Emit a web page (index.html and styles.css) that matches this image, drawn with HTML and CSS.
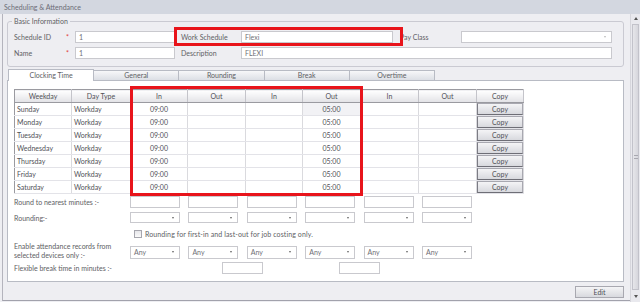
FILE: index.html
```html
<!DOCTYPE html>
<html lang="en">
<head>
    <meta charset="UTF-8">
    <meta name="viewport" content="width=device-width, initial-scale=1.0">
    <title>Scheduling &amp; Attendance</title>
    <link rel="stylesheet" href="styles.css">
</head>
<body>
    <div class="titlebar">Scheduling &amp; Attendance</div>
    <div class="frame">
        <div class="main">
            <fieldset class="basic">
                <legend>Basic Information</legend>
                <div class="basic-grid">
                    <span>Schedule ID</span><span class="req">*</span><div class="field">1</div>
                    <span class="lbl-mid">Work Schedule</span><div class="field">Flexi</div>
                    <span class="lbl-right">Pay Class</span><div class="field select"><span></span><i class="arrow light"></i></div>
                    <span>Name</span><span class="req">*</span><div class="field">1</div>
                    <span class="lbl-mid">Description</span><div class="field wide">FLEXI</div>
                </div>
            </fieldset>

            <div class="tabs">
                <div class="tab active">Clocking Time</div>
                <div class="tab">General</div>
                <div class="tab">Rounding</div>
                <div class="tab">Break</div>
                <div class="tab">Overtime</div>
            </div>

            <div class="panel">
                <table class="times">
                    <colgroup>
                        <col style="width:57px"><col style="width:59px"><col style="width:57px">
                        <col style="width:58px"><col style="width:57px"><col style="width:58px">
                        <col style="width:58px"><col style="width:58px"><col style="width:47px">
                    </colgroup>
                    <thead>
                        <tr><th>Weekday</th><th>Day Type</th><th>In</th><th>Out</th><th>In</th><th>Out</th><th>In</th><th>Out</th><th>Copy</th></tr>
                    </thead>
                    <tbody>
                        <tr><td>Sunday</td><td>Workday</td><td class="t">09:00</td><td></td><td></td><td class="t cur">05:00</td><td></td><td></td><td class="copy"><button>Copy</button></td></tr>
                        <tr><td>Monday</td><td>Workday</td><td class="t">09:00</td><td></td><td></td><td class="t">05:00</td><td></td><td></td><td class="copy"><button>Copy</button></td></tr>
                        <tr><td>Tuesday</td><td>Workday</td><td class="t">09:00</td><td></td><td></td><td class="t">05:00</td><td></td><td></td><td class="copy"><button>Copy</button></td></tr>
                        <tr><td>Wednesday</td><td>Workday</td><td class="t">09:00</td><td></td><td></td><td class="t">05:00</td><td></td><td></td><td class="copy"><button>Copy</button></td></tr>
                        <tr><td>Thursday</td><td>Workday</td><td class="t">09:00</td><td></td><td></td><td class="t">05:00</td><td></td><td></td><td class="copy"><button>Copy</button></td></tr>
                        <tr><td>Friday</td><td>Workday</td><td class="t">09:00</td><td></td><td></td><td class="t">05:00</td><td></td><td></td><td class="copy"><button>Copy</button></td></tr>
                        <tr><td>Saturday</td><td>Workday</td><td class="t">09:00</td><td></td><td></td><td class="t">05:00</td><td></td><td></td><td class="copy"><button>Copy</button></td></tr>
                    </tbody>
                </table>

                <div class="opt-row row-round">
                    <span>Round to nearest minutes :-</span>
                    <div class="field"></div><div class="field"></div><div class="field"></div>
                    <div class="field"></div><div class="field"></div><div class="field"></div>
                </div>
                <div class="opt-row row-rounding">
                    <span>Rounding:-</span>
                    <div class="field select"><span></span><i class="arrow"></i></div>
                    <div class="field select"><span></span><i class="arrow"></i></div>
                    <div class="field select"><span></span><i class="arrow"></i></div>
                    <div class="field select"><span></span><i class="arrow"></i></div>
                    <div class="field select"><span></span><i class="arrow"></i></div>
                    <div class="field select"><span></span><i class="arrow"></i></div>
                </div>
                <div class="opt-row row-check">
                    <label class="checkline"><span class="checkbox"></span>Rounding for first-in and last-out for job costing only.</label>
                </div>
                <div class="opt-row row-enable">
                    <span class="two-line">Enable attendance records from<br>selected devices only :-</span>
                    <div class="field select">Any<i class="arrow"></i></div>
                    <div class="field select">Any<i class="arrow"></i></div>
                    <div class="field select">Any<i class="arrow"></i></div>
                    <div class="field select">Any<i class="arrow"></i></div>
                    <div class="field select">Any<i class="arrow"></i></div>
                    <div class="field select">Any<i class="arrow"></i></div>
                </div>
                <div class="opt-row row-flex">
                    <span>Flexible break time in minutes :-</span>
                    <div class="field small span-a"></div>
                    <div class="field small span-b"></div>
                </div>
            </div>

            <div class="footer">
                <button class="btn-edit">Edit</button>
            </div>
        </div>

        <div class="scrollbar">
            <i class="sb-up"></i>
            <div class="sb-thumb"><span class="grip"></span></div>
            <i class="sb-down"></i>
        </div>
    </div>

    <div class="mark mark-work"></div>
    <div class="mark mark-times"></div>
</body>
</html>
```

FILE: styles.css
```css
*{
    margin: 0;
    padding: 0;
    box-sizing: border-box;
}
body{
    width: 640px;
    height: 302px;
    overflow: hidden;
    background-color: #eeeef2;
    font-family: Lato, "Open Sans", sans-serif;
    font-size: 7px;
    color: #5e5e64;
}
.titlebar{
    height: 14px;
    line-height: 14px;
    padding-left: 4px;
    background-color: #d3d7e0;
    color: #6c6c76;
}
.frame{
    display: flex;
    height: 288px;
}
.main{
    flex: 1;
    height: 287px;
    margin-left: 2px;
    border-left: 1px solid #b4b4bd;
    border-bottom: 1px solid #a2a2ac;
}

/* basic information */
.basic{
    margin: 3px 6px 0 4px;
    border: 1px solid #cacad2;
    border-radius: 3px;
    padding: 5px 11px 7px 6px;
}
.basic legend{
    margin-left: -2px;
    padding: 0 2px;
    line-height: 9px;
}
.basic-grid{
    display: grid;
    grid-template-columns: 52px 9px 100px 66px 152px 68px 151px;
    grid-template-rows: 12px 12px;
    row-gap: 4px;
    align-items: center;
}
.req{
    color: #e23b3b;
}
.lbl-mid{
    padding-left: 6px;
}
.lbl-right{
    padding-left: 7px;
}
.field{
    height: 12px;
    line-height: 10px;
    padding-left: 3px;
    background-color: #fff;
    border: 1px solid #c9c9ce;
    color: #707076;
}
.field.wide{
    grid-column: 5 / 8;
}
.field.select{
    display: flex;
    align-items: center;
    justify-content: space-between;
    padding-right: 5px;
}
.arrow{
    width: 0;
    height: 0;
    border-left: 1.5px solid transparent;
    border-right: 1.5px solid transparent;
    border-top: 2px solid #666;
}
.arrow.light{
    border-top-color: #bbb;
}

/* tabs */
.tabs{
    display: flex;
    align-items: flex-end;
    height: 11px;
    margin: 2px 0 0 5px;
}
.tab{
    width: 86.2px;
    height: 10px;
    line-height: 9px;
    text-align: center;
    border: 1px solid #b8bbc4;
    border-bottom: none;
    margin-right: -1px;
    background: linear-gradient(#f7f7f9, #dcdfe5);
}
.tab.active{
    height: 12px;
    margin-bottom: -1px;
    line-height: 11px;
    background: #fff;
    position: relative;
}

/* panel */
.panel{
    height: 202px;
    margin: 0 6px 0 4px;
    padding: 8px 0 0 6px;
    background-color: #fff;
    border: 1px solid #b8bbc4;
}
.times{
    width: 509px;
    table-layout: fixed;
    border-collapse: collapse;
    border: 1px solid #9a9aa0;
    color: #505056;
}
.times th{
    height: 13px;
    font-weight: normal;
    background: linear-gradient(#ffffff, #e2e2e6);
    border-bottom: 1px solid #9a9aa0;
    border-right: 1px solid #c4c4ca;
}
.times td{
    height: 13px;
    padding-left: 2px;
    border-bottom: 1px solid #e3e3e8;
    border-right: 1px solid #dadade;
    white-space: nowrap;
}
.times td.t{
    text-align: center;
    padding-left: 0;
}
.times td.cur{
    background-color: #f2f2f5;
}
.times td.copy{
    padding: 0;
}
.times button, .btn-edit{
    display: block;
    width: 100%;
    height: 12px;
    font: inherit;
    color: #505056;
    background: linear-gradient(#f4f4f6, #d8d9de);
    border: 1px solid #a8a8b0;
    border-left-color: #7c7c84;
    border-bottom-color: #6e6e76;
}

/* option rows under the table */
.opt-row{
    display: grid;
    grid-template-columns: 107.6px repeat(6, 50px);
    column-gap: 8.4px;
    align-items: center;
}
.row-round{
    margin-top: 2px;
    height: 12px;
}
.row-rounding{
    margin-top: 4px;
    height: 11px;
}
.row-rounding .field{
    height: 11px;
}
.row-check{
    margin-top: 7px;
    height: 8px;
}
.checkline{
    grid-column: 2 / 8;
    display: flex;
    align-items: center;
    padding-left: 4px;
    letter-spacing: 0.1px;
}
.checkbox{
    width: 8px;
    height: 8px;
    margin-right: 3px;
    border: 1px solid #a6a6ae;
    background: linear-gradient(#e6e6ea, #fafafa);
}
.row-enable{
    margin-top: 6px;
    height: 13px;
}
.row-enable .field{
    height: 13px;
    line-height: 11px;
}
.two-line{
    align-self: start;
    margin-top: -2px;
    line-height: 9px;
    white-space: nowrap;
}
.row-flex{
    margin-top: 5px;
    height: 12px;
}
.field.small{
    width: 41px;
    justify-self: center;
}
.span-a{
    grid-column: 3 / 5;
}
.span-b{
    grid-column: 5 / 7;
}

/* footer */
.footer{
    display: flex;
    justify-content: flex-end;
    padding: 4px 6px 0 0;
}
.btn-edit{
    width: 49px;
    border-color: #a8a8b0;
}

/* scrollbar */
.scrollbar{
    width: 10px;
    display: flex;
    flex-direction: column;
    align-items: center;
    padding: 3px 0 4px;
    background-color: #e9e9ee;
    border-left: 1px solid #d6d6dc;
}
.sb-up, .sb-down{
    width: 0;
    height: 0;
    border-left: 2.5px solid transparent;
    border-right: 2.5px solid transparent;
}
.sb-up{
    border-bottom: 3px solid #555;
}
.sb-down{
    border-top: 3px solid #555;
}
.sb-thumb{
    flex: 1;
    width: 7px;
    margin: 4px 0 5px;
    display: flex;
    align-items: center;
    justify-content: center;
    background: linear-gradient(90deg, #e6e6ea, #d6d6dc);
    border: 1px solid #c2c2ca;
}
.grip{
    width: 4px;
    height: 4px;
    border-top: 1px solid #a8a8b0;
    border-bottom: 1px solid #a8a8b0;
}

/* red annotation boxes drawn over the screen */
.mark{
    position: absolute;
    border: 3px solid #e8141b;
}
.mark-work{
    left: 174px;
    top: 27px;
    width: 229px;
    height: 19px;
}
.mark-times{
    left: 130px;
    top: 86px;
    width: 233px;
    height: 110px;
}
```
